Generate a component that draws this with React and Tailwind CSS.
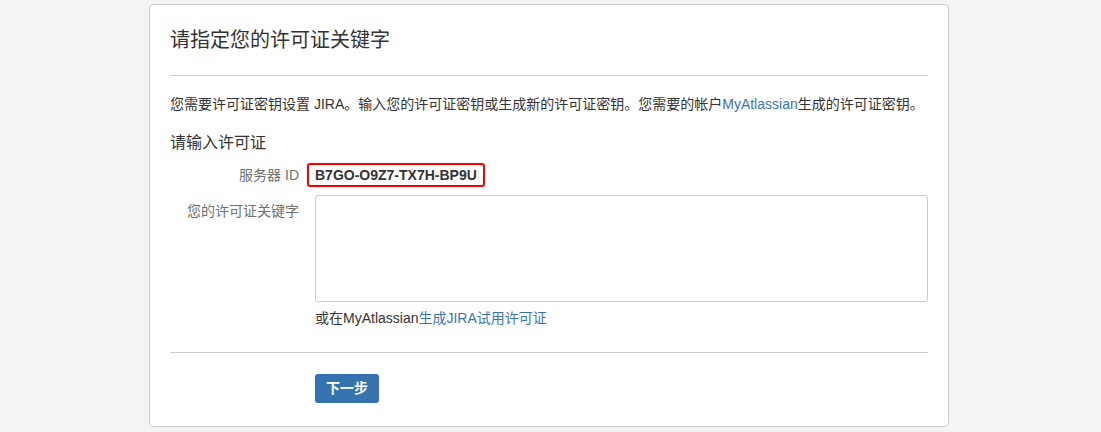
import React from "react";

const font = { fontFamily: '"Liberation Sans", Arial, "Noto Sans CJK SC", sans-serif' };

const App = () => {
    return (
        <div className="min-h-[432px] w-full bg-[#f4f4f4] pt-[4px] text-[#333]" style={font}>
            <div className="ml-[149px] h-[423px] w-[800px] rounded-[4px] border border-[#cccccc] bg-white px-[20px]">
                {/* header */}
                <h2 className="pt-[20px] text-[20px] leading-[30px] font-normal">请指定您的许可证关键字</h2>
                <div className="mt-[20px] h-px bg-[#cccccc]" />

                <p className="mt-[18px] text-[14px] leading-[20px]">
                    您需要许可证密钥设置 JIRA。输入您的许可证密钥或生成新的许可证密钥。您需要的帐户
                    <a className="text-[#3b73af]">MyAtlassian</a>
                    生成的许可证密钥。
                </p>

                <h3 className="mt-[17px] text-[16px] leading-[24px] font-normal">请输入许可证</h3>

                {/* server id */}
                <div className="mt-[8px] flex items-center">
                    <label className="w-[137px] pr-[8px] text-right text-[14px] leading-[24px] text-[#707070]">服务器 ID</label>
                    <span className="rounded-[3px] border-2 border-[#ff0000] px-[6px] text-[14px] leading-[20px] font-bold text-[#333]">
                        B7GO-O9Z7-TX7H-BP9U
                    </span>
                </div>

                {/* license key */}
                <div className="mt-[8px] flex items-start">
                    <label className="w-[145px] pt-[6px] pr-[16px] text-right text-[14px] leading-[20px] text-[#707070]">您的许可证关键字</label>
                    <div className="flex-1">
                        <textarea className="block h-[107px] w-[613px] resize-none rounded-[3px] border border-[#cccccc] bg-white" />
                        <p className="mt-[6px] text-[14px] leading-[20px]">
                            或在MyAtlassian<a className="text-[#3b73af]">生成JIRA试用许可证</a>
                        </p>
                    </div>
                </div>

                <div className="mt-[24px] h-px bg-[#cccccc]" />

                <div className="mt-[21px] pl-[145px]">
                    <button className="h-[29px] w-[64px] rounded-[3px] bg-[#3572b0] text-[14px] font-bold text-white">下一步</button>
                </div>
            </div>
        </div>
    );
};

export default App;
